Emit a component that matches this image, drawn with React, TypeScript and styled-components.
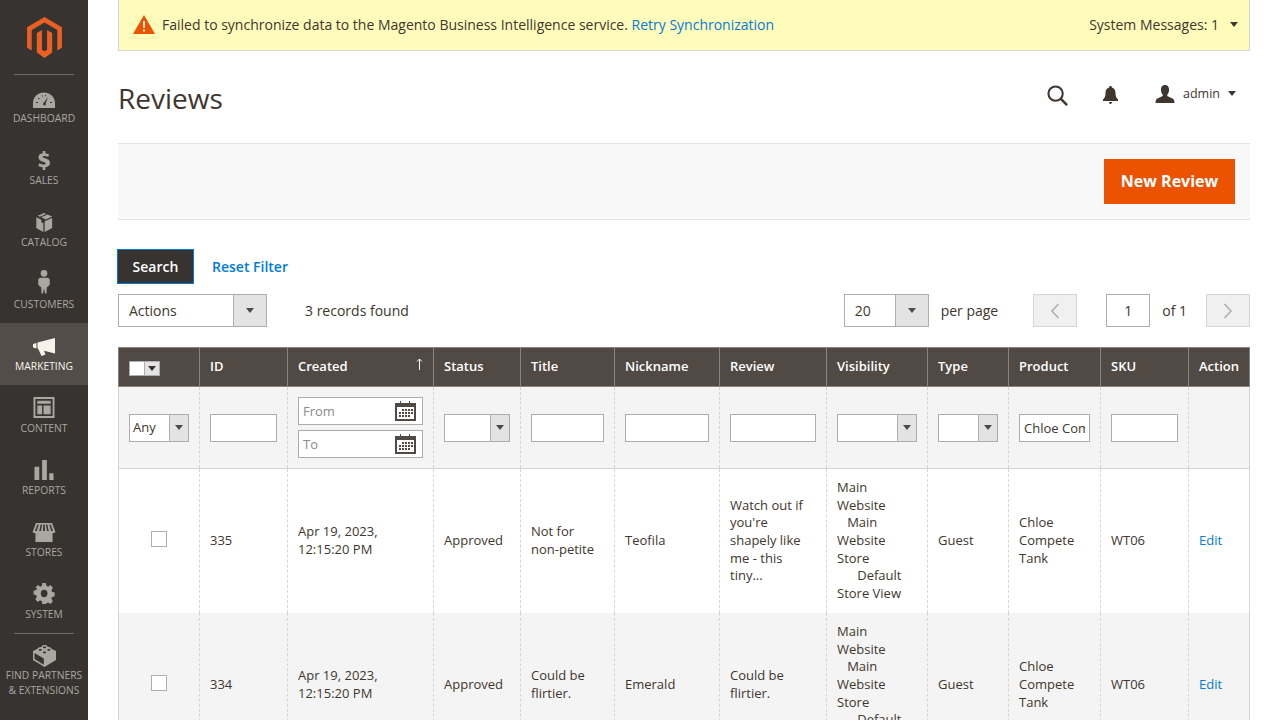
import React from "react";
import styled, { createGlobalStyle } from "styled-components";

const GlobalStyle = createGlobalStyle`
  html, body {
    margin: 0;
    height: 720px;
    overflow: hidden;
    background: #fff;
    font-family: "Open Sans", "Liberation Sans", sans-serif;
    color: #41362f;
  }
  * { box-sizing: border-box; }
`;

const Page = styled.div`
  display: flex;
  width: 1280px;
  height: 720px;
  overflow: hidden;
`;

const Sidebar = styled.nav`
  flex: 0 0 88px;
  height: 720px;
  background: #373330;
`;

const LogoBox = styled.div`
  height: 75px;
  margin: 0 14px;
  border-bottom: 1px solid #736d69;
  padding-top: 17px;
  padding-left: 13px;
  svg { display: block; }
`;

const MenuItem = styled.div<{ $active?: boolean }>`
  height: 62px;
  display: flex;
  flex-direction: column;
  align-items: center;
  justify-content: flex-end;
  padding-bottom: 12px;
  background: ${(p) => (p.$active ? "#524d49" : "transparent")};
  color: ${(p) => (p.$active ? "#f7f3eb" : "#aaa6a0")};
  font-size: 10.3px;
  line-height: 14px;
  text-align: center;
  white-space: nowrap;
  svg { display: block; margin-bottom: 3px; }
`;

const Divider = styled.div`
  height: 1px;
  margin: 0 14px;
  background: #736d69;
`;

const PartnersItem = styled(MenuItem)`
  height: 70px;
  padding-bottom: 0;
  justify-content: flex-start;
  padding-top: 11px;
  line-height: 15px;
  svg { margin-bottom: 1px; }
`;

const Main = styled.main`
  flex: 1;
  min-width: 0;
  padding: 0 30px;
`;

const Notice = styled.div`
  height: 51px;
  background: #fffbbb;
  border: 1px solid #d6d6d6;
  border-top: 0;
  display: flex;
  align-items: center;
  justify-content: space-between;
  padding: 0 11px 2px 14px;
  font-size: 14px;
  color: #41362f;
`;

const NoticeText = styled.div`
  display: flex;
  align-items: center;
  gap: 7px;
`;

const Link = styled.a`
  color: #007bdb;
`;

const Messages = styled.div`
  display: flex;
  align-items: center;
  gap: 11px;
`;

const Caret = styled.span<{ $color?: string }>`
  display: inline-block;
  width: 0;
  height: 0;
  border-left: 4px solid transparent;
  border-right: 4px solid transparent;
  border-top: 5px solid ${(p) => p.$color || "#41362f"};
`;

const PageHead = styled.header`
  height: 92px;
  display: flex;
  align-items: center;
  justify-content: space-between;
`;

const Title = styled.h1`
  margin: 1px 0 0;
  font-size: 28px;
  font-weight: 400;
  line-height: 36px;
  color: #41362f;
`;

const HeadActions = styled.div`
  display: flex;
  align-items: center;
  padding-right: 14px;
  margin-bottom: 4px;
  font-size: 12.5px;
  svg { display: block; }
`;

const Bell = styled.span`
  margin-left: 35px;
`;

const User = styled.div`
  display: flex;
  align-items: center;
  margin-left: 37px;
  margin-bottom: 3px;
  gap: 8px;
`;

const ActionsBar = styled.div`
  height: 77px;
  background: #f8f8f8;
  border-top: 1px solid #e3e3e3;
  border-bottom: 1px solid #e3e3e3;
  display: flex;
  align-items: center;
  justify-content: flex-end;
  padding-right: 15px;
`;

const PrimaryButton = styled.button`
  width: 131px;
  height: 45px;
  padding: 0 0 2px;
  border: 1px solid #eb5202;
  background: #eb5202;
  color: #fff;
  font: 700 16px "Open Sans", sans-serif;
`;

const FilterActions = styled.div`
  display: flex;
  align-items: center;
  gap: 18px;
  margin: 29px 0 0 -1px;
`;

const SearchButton = styled.button`
  width: 77px;
  height: 35px;
  border: 1px solid #007bdb;
  background: #373330;
  color: #fff;
  font: 600 14px "Open Sans", sans-serif;
`;

const BoldLink = styled(Link)`
  font-size: 14px;
  font-weight: 600;
`;

const GridControls = styled.div`
  display: flex;
  align-items: center;
  height: 33px;
  margin-top: 10px;
  font-size: 14px;
`;

const Select = styled.div<{ $width: number; $height?: number; $arrow?: number }>`
  flex: none;
  display: inline-grid;
  grid-template-columns: 1fr ${(p) => p.$arrow ?? 33}px;
  vertical-align: middle;
  width: ${(p) => p.$width}px;
  height: ${(p) => p.$height ?? 33}px;
  border: 1px solid #adadad;
  background: #fff;
  color: #41362f;
`;

const SelectValue = styled.span<{ $left?: number; $size?: number }>`
  display: flex;
  align-items: center;
  padding-left: ${(p) => p.$left ?? 10}px;
  font-size: ${(p) => p.$size ?? 14}px;
  overflow: hidden;
`;

const SelectArrow = styled.span`
  display: flex;
  align-items: center;
  justify-content: center;
  background: #e3e3e3;
  border-left: 1px solid #adadad;
`;

const Records = styled.span`
  margin-left: 38px;
  color: #41362f;
`;

const Spacer = styled.div`
  flex: 1;
`;

const PerPage = styled.span`
  margin: 0 35px 0 12px;
`;

const PagerButton = styled.span`
  flex: none;
  width: 44px;
  height: 33px;
  display: flex;
  align-items: center;
  justify-content: center;
  background: #f0f0f0;
  border: 1px solid #d6d6d6;
`;

const PageInput = styled.span`
  flex: none;
  width: 44px;
  height: 33px;
  margin-left: 29px;
  border: 1px solid #adadad;
  display: flex;
  align-items: center;
  justify-content: center;
`;

const OfPages = styled.span`
  margin: 0 19px 0 12px;
`;

const Grid = styled.table`
  width: 1131px;
  margin-top: 20px;
  border-collapse: collapse;
  table-layout: fixed;
  font-size: 13px;
  line-height: 17.68px;
  color: #41362f;
  td:first-child { border-left: 1px solid #d6d6d6; }
  td:last-child { border-right: 1px solid #d6d6d6; }
`;

const HeadCell = styled.th`
  position: relative;
  height: 39px;
  padding: 0 10px;
  background: #514943;
  border: 1px solid #8a837f;
  color: #fff;
  font-size: 13px;
  font-weight: 600;
  text-align: left;
  white-space: nowrap;
`;

const SortMark = styled.svg`
  position: absolute;
  top: 10px;
  right: 10px;
  display: block;
`;

const MassSelect = styled.span`
  display: inline-flex;
  vertical-align: middle;
  margin-top: 1px;
  width: 31px;
  height: 15px;
  background: #fff;
  border: 1px solid #adadad;
`;

const MassCheck = styled.span`
  flex: 1;
  background: #fff;
`;

const MassArrow = styled.span`
  flex: 0 0 15px;
  display: flex;
  align-items: center;
  justify-content: center;
  background: #e3e3e3;
  border-left: 1px solid #adadad;
`;

const FilterCell = styled.td`
  height: 82px;
  padding: 0 10px;
  background: #f4f4f4;
  border-left: 1px dashed #d6d6d6;
  border-right: 1px dashed #d6d6d6;
  border-bottom: 1px solid #d6d6d6;
  vertical-align: middle;
`;

const FilterInput = styled.input`
  display: block;
  width: 100%;
  height: 28px;
  padding: 0 4px;
  border: 1px solid #adadad;
  border-radius: 0;
  outline: 0;
  background: #fff;
  font: 13px "Open Sans", sans-serif;
  color: #41362f;
  &::placeholder { color: #8a8a8a; opacity: 1; }
`;

const DateStack = styled.div`
  display: flex;
  flex-direction: column;
  gap: 5px;
`;

const DateField = styled.div`
  position: relative;
  svg { position: absolute; top: 3px; right: 7px; display: block; }
`;

const Row = styled.tr<{ $striped?: boolean }>`
  background: ${(p) => (p.$striped ? "#f4f4f4" : "#fff")};
`;

const Cell = styled.td`
  padding: 10px;
  border-left: 1px dashed #d6d6d6;
  border-right: 1px dashed #d6d6d6;
  vertical-align: middle;
`;

const Checkbox = styled.span`
  display: block;
  width: 16px;
  height: 16px;
  margin: 0 auto 4px;
  background: #fff;
  border: 1px solid #adadad;
`;

function ArrowDown() {
  return <Caret $color="#514943" />;
}

function CalendarIcon() {
  return (
    <svg width="21" height="21" viewBox="0 0 21 21">
      <path fill="#514943" d="M0 3h5V1h1v2h8V1h1v2h6v18H0z" />
      <rect x="2" y="7" width="17" height="12" fill="#fff" />
      <path
        fill="#514943"
        d="M7 9h2v2H7zM10 9h2v2h-2zM13 9h2v2h-2zM16 9h2v2h-2zM4 12h2v2H4zM7 12h2v2H7zM10 12h2v2h-2zM13 12h2v2h-2zM16 12h2v2h-2zM4 15h2v2H4zM7 15h2v2H7zM10 15h2v2h-2zM13 15h2v2h-2z"
      />
    </svg>
  );
}

const sideIcon = "currentColor";

const menu: { label: string; icon: React.ReactNode; active?: boolean }[] = [
  {
    label: "DASHBOARD",
    icon: (
      <svg width="22" height="16" viewBox="0 0 22 16">
        <path
          fill={sideIcon}
          fillRule="evenodd"
          d="M0 16V11C0 5 5 .5 11 .5S22 5 22 11v5zM11.500 13.500c1.200-.2 1.700-1.300 1.200-2.200L15 4.800l-4 5.800c-1.200.5-1.300 2.900.5 2.900zM3 11h2v-1H3zM17 11h2v-1h-2zM5 6.500l1 1 .7-.7-1-1zM8.500 3.500l.6 1.300.8-.3-.6-1.300zM12 3h1v1.300h-1z"
        />
      </svg>
    ),
  },
  {
    label: "SALES",
    icon: (
      <svg width="12" height="19" viewBox="0 0 14 22">
        <path
          fill={sideIcon}
          d="M5.500 0h3v2.600c1.800.2 3.300.7 4.500 1.400l-1.100 3c-1.500-.9-3-1.300-4.500-1.300-1.300 0-1.900.4-1.900 1 0 .7.800 1 2.800 1.700C11.700 9.300 14 10.500 14 13.800c0 2.600-1.800 4.500-5.500 5V22h-3v-3.100c-2-.2-3.900-.8-5.100-1.700l1.200-3c1.500 1 3.300 1.600 5 1.600 1.500 0 2.300-.5 2.300-1.300 0-.8-.8-1.200-2.900-1.900C3 11.500.6 10.400.6 7.200c0-2.400 1.700-4.200 4.900-4.600z"
        />
      </svg>
    ),
  },
  {
    label: "CATALOG",
    icon: (
      <svg width="18" height="19" viewBox="0 0 19 21">
        <path
          fill={sideIcon}
          d="M9.500 0l2.400 1-6.800 3.200L2.500 3.100zM13.300 1.600L18.500 4l-6.900 3.200L6.500 4.800zM1 4.800l5.500 2.700v2.800l2.300 1V21L1 16.500zM18.500 5.400v11.100L10.200 21V9z"
        />
      </svg>
    ),
  },
  {
    label: "CUSTOMERS",
    icon: (
      <svg width="12" height="24" viewBox="0 0 12 25">
        <path
          fill={sideIcon}
          d="M6 0a3.500 3.500 0 1 1 0 7 3.500 3.500 0 0 1 0-7zM2.500 8h7C11 8 12 9 12 10.500V15l-1.500 2L9 18l-.5 7-1.500-.7L6 19l-1 5.300-1.500.7L3 18l-1.500-1L0 15v-4.500C0 9 1 8 2.500 8z"
        />
      </svg>
    ),
  },
  {
    label: "MARKETING",
    active: true,
    icon: (
      <svg width="22" height="18" viewBox="0 0 22 18">
        <path
          fill={sideIcon}
          d="M22 0v15.500L11 12.800l1.500 3.700L8.500 18 5.500 11.500 4.500 10V4.500L22 0zM0 6l3.500-1v5.500L0 9.500z"
        />
      </svg>
    ),
  },
  {
    label: "CONTENT",
    icon: (
      <svg width="22" height="21" viewBox="0 0 22 22">
        <path
          fill={sideIcon}
          fillRule="evenodd"
          d="M0 0h22v22H0zM2 2v18h18V2zM4 4h14v3H4zM4 9h5v9H4zM10.500 9H18v9h-7.500z"
        />
      </svg>
    ),
  },
  {
    label: "REPORTS",
    icon: (
      <svg width="20" height="20" viewBox="0 0 20 21">
        <path fill={sideIcon} d="M0 7h5v14H0zM8 0h5v21H8zM15.500 14H20v7h-4.500z" />
      </svg>
    ),
  },
  {
    label: "STORES",
    icon: (
      <svg width="24" height="19" viewBox="0 0 24 20">
        <path
          fill={sideIcon}
          fillRule="evenodd"
          d="M3.500 0h17L24 9.500c-.5 1.200-2 1.500-3 .8V20H3V10.300c-1 .7-2.500.4-3-.8zM5 1.500L2.500 8.500h1.800L6.500 1.500zM8.500 1.500L7 8.500h1.800l1.200-7zM11.200 1.500l-.2 7h2l-.2-7zM14 1.500l1.200 7H17l-1.500-7zM17.500 1.500l2.200 7h1.800L19 1.500z"
        />
      </svg>
    ),
  },
  {
    label: "SYSTEM",
    icon: (
      <svg width="22" height="21" viewBox="0 0 22 22">
        <path
          fill={sideIcon}
          fillRule="evenodd"
          d="M9 0h4l.6 3 2 .8 2.600-1.700 2.800 2.800-1.700 2.600.8 2 2.900.5v4l-3 .6-.7 2 1.700 2.600-2.800 2.800-2.600-1.700-2 .8L13 22H9l-.6-3-2-.8-2.600 1.700L1 17.100l1.700-2.600-.8-2L-1 12V8l3-.6.800-2L1.100 4.900 3.900 2.100l2.600 1.700 2-.8zM11 7.200a3.800 3.800 0 1 0 0 7.600 3.800 3.800 0 0 0 0-7.600z"
          transform="translate(1 0) scale(.92 1)"
        />
      </svg>
    ),
  },
];

const rows = [
  {
    id: "335",
    title: "Not for non-petite",
    nickname: "Teofila",
    review: "Watch out if you're shapely like me - this tiny...",
  },
  {
    id: "334",
    title: "Could be flirtier.",
    nickname: "Emerald",
    review: "Could be flirtier.",
  },
];

const columns = [81, 88, 146, 87, 94, 105, 107, 101, 81, 92, 88, 61];

export default function App() {
  return (
    <Page>
      <GlobalStyle />
      <Sidebar>
        <LogoBox>
          <svg width="35" height="41" viewBox="0 0 34 40">
            <path
              fill="#eb5f22"
              d="M17 0l17 10v20l-4.500 2.600V12.600L17 5.300 4.500 12.600v20L0 30V10zM9.500 15.500L14.500 12.600v19.300L17 33.400l2.500-1.500V12.600l5 2.900v19.200L17 40l-7.500-5.300z"
            />
          </svg>
        </LogoBox>
        {menu.map((item) => (
          <MenuItem key={item.label} $active={item.active}>
            {item.icon}
            {item.label}
          </MenuItem>
        ))}
        <Divider />
        <PartnersItem>
          <svg width="23" height="22" viewBox="0 0 23 22">
            <path
              fill="currentColor"
              fillRule="evenodd"
              d="M11.500 0c1.500 0 2.600.6 2.800 1.300l.1.300 1.100.5c1.500 0 2.800.7 2.800 1.600l4.700 2.300v9L11.500 22 0 15V6l4.600-2.200c.1-.8 1.300-1.500 2.800-1.500l1.200-.6C8.800.7 10 0 11.500 0zM1.500 8v6.100l9.300 5.600v-6.200zM7.300 4c-1 0-1.600.4-1.600.9s.7.900 1.600.9 1.600-.4 1.600-.9-.7-.9-1.600-.9zM15.800 4c-1 0-1.600.4-1.600.9s.7.900 1.600.9 1.600-.4 1.600-.9-.7-.9-1.600-.9zM11.500 1.500c-1 0-1.600.4-1.600.9s.7.900 1.600.9 1.600-.4 1.600-.9-.7-.9-1.600-.9zM11.500 6.500c-1 0-1.600.4-1.600.9s.7.900 1.600.9 1.600-.4 1.600-.9-.7-.9-1.600-.9z"
            />
          </svg>
          FIND PARTNERS
          <br />& EXTENSIONS
        </PartnersItem>
      </Sidebar>
      <Main>
        <Notice>
          <NoticeText>
            <svg width="22" height="19" viewBox="0 0 22 19">
              <path fill="#eb5202" d="M11 0l11 19H0z" />
              <path fill="#fff" d="M10 6h2l-.3 7h-1.400zM10 14.500h2v2h-2z" />
            </svg>
            <span>
              Failed to synchronize data to the Magento Business Intelligence
              service. <Link>Retry Synchronization</Link>
            </span>
          </NoticeText>
          <Messages>
            System Messages: 1 <Caret />
          </Messages>
        </Notice>
        <PageHead>
          <Title>Reviews</Title>
          <HeadActions>
            <svg width="21" height="21" viewBox="0 0 22 22">
              <circle cx="9" cy="9" r="7.500" fill="none" stroke="#41362f" strokeWidth="2.200" />
              <path d="M14.500 14.500L21 21" stroke="#41362f" strokeWidth="2.600" />
            </svg>
            <Bell>
              <svg width="15" height="18" viewBox="0 0 15 18">
                <path
                  fill="#41362f"
                  d="M7.500 0c.9 0 1.300.6 1.400 1.400C11.300 2.200 12.500 4 12.500 7c0 3.500.8 5 2.500 6.500V15H0v-1.500C1.700 12 2.500 10.500 2.500 7c0-3 1.200-4.800 3.600-5.600C6.200.6 6.600 0 7.500 0zM6 16h3c0 1.200-.6 2-1.500 2S6 17.200 6 16z"
                />
              </svg>
            </Bell>
            <User>
              <svg width="20" height="18" viewBox="0 0 20 19">
                <path
                  fill="#41362f"
                  d="M10 0c2.800 0 4.300 2 4.300 5 0 2.300-.8 4-1.900 5.200v1.500l5 2.300c1.600.7 2.600 1.600 2.600 5H0c0-3.400 1-4.300 2.600-5l5-2.300v-1.500C6.500 9 5.700 7.300 5.700 5 5.700 2 7.200 0 10 0z"
                />
              </svg>
              admin
              <Caret />
            </User>
          </HeadActions>
        </PageHead>
        <ActionsBar>
          <PrimaryButton>New Review</PrimaryButton>
        </ActionsBar>
        <FilterActions>
          <SearchButton>Search</SearchButton>
          <BoldLink>Reset Filter</BoldLink>
        </FilterActions>
        <GridControls>
          <Select $width={149}>
            <SelectValue>Actions</SelectValue>
            <SelectArrow>
              <ArrowDown />
            </SelectArrow>
          </Select>
          <Records>3 records found</Records>
          <Spacer />
          <Select $width={85}>
            <SelectValue>20</SelectValue>
            <SelectArrow>
              <ArrowDown />
            </SelectArrow>
          </Select>
          <PerPage>per page</PerPage>
          <PagerButton>
            <svg width="10" height="16" viewBox="0 0 10 16">
              <path d="M8.500 1L2 8l6.500 7" fill="none" stroke="#adadad" strokeWidth="1.500" />
            </svg>
          </PagerButton>
          <PageInput>1</PageInput>
          <OfPages>of 1</OfPages>
          <PagerButton>
            <svg width="10" height="16" viewBox="0 0 10 16">
              <path d="M1.500 1L8 8l-6.500 7" fill="none" stroke="#adadad" strokeWidth="1.500" />
            </svg>
          </PagerButton>
        </GridControls>
        <Grid>
          <colgroup>
            {columns.map((w, i) => (
              <col key={i} width={w} />
            ))}
          </colgroup>
          <thead>
            <tr>
              <HeadCell>
                <MassSelect>
                  <MassCheck />
                  <MassArrow>
                    <Caret $color="#373330" />
                  </MassArrow>
                </MassSelect>
              </HeadCell>
              <HeadCell>ID</HeadCell>
              <HeadCell>
                Created
                <SortMark width="7" height="12" viewBox="0 0 7 12">
                  <path d="M3.500 12V1M1 3.500L3.500 1 6 3.500" fill="none" stroke="#fff" />
                </SortMark>
              </HeadCell>
              <HeadCell>Status</HeadCell>
              <HeadCell>Title</HeadCell>
              <HeadCell>Nickname</HeadCell>
              <HeadCell>Review</HeadCell>
              <HeadCell>Visibility</HeadCell>
              <HeadCell>Type</HeadCell>
              <HeadCell>Product</HeadCell>
              <HeadCell>SKU</HeadCell>
              <HeadCell>Action</HeadCell>
            </tr>
            <tr>
              <FilterCell>
                <Select $width={60} $height={28} $arrow={19}>
                  <SelectValue $left={3} $size={13}>Any</SelectValue>
                  <SelectArrow>
                    <ArrowDown />
                  </SelectArrow>
                </Select>
              </FilterCell>
              <FilterCell>
                <FilterInput readOnly />
              </FilterCell>
              <FilterCell>
                <DateStack>
                  <DateField>
                    <FilterInput readOnly placeholder="From" />
                    <CalendarIcon />
                  </DateField>
                  <DateField>
                    <FilterInput readOnly placeholder="To" />
                    <CalendarIcon />
                  </DateField>
                </DateStack>
              </FilterCell>
              <FilterCell>
                <Select $width={66} $height={28} $arrow={19}>
                  <SelectValue />
                  <SelectArrow>
                    <ArrowDown />
                  </SelectArrow>
                </Select>
              </FilterCell>
              <FilterCell>
                <FilterInput readOnly />
              </FilterCell>
              <FilterCell>
                <FilterInput readOnly />
              </FilterCell>
              <FilterCell>
                <FilterInput readOnly />
              </FilterCell>
              <FilterCell>
                <Select $width={80} $height={28} $arrow={19}>
                  <SelectValue />
                  <SelectArrow>
                    <ArrowDown />
                  </SelectArrow>
                </Select>
              </FilterCell>
              <FilterCell>
                <Select $width={60} $height={28} $arrow={19}>
                  <SelectValue />
                  <SelectArrow>
                    <ArrowDown />
                  </SelectArrow>
                </Select>
              </FilterCell>
              <FilterCell>
                <FilterInput readOnly value="Chloe Compete Tank" />
              </FilterCell>
              <FilterCell>
                <FilterInput readOnly />
              </FilterCell>
              <FilterCell />
            </tr>
          </thead>
          <tbody>
            {rows.map((row, i) => (
              <Row key={row.id} $striped={i % 2 === 1}>
                <Cell>
                  <Checkbox />
                </Cell>
                <Cell>{row.id}</Cell>
                <Cell>
                  Apr 19, 2023,
                  <br />
                  12:15:20 PM
                </Cell>
                <Cell>Approved</Cell>
                <Cell>{row.title}</Cell>
                <Cell>{row.nickname}</Cell>
                <Cell>{row.review}</Cell>
                <Cell>
                  Main Website
                  <br />
                  {"\u00a0\u00a0\u00a0"}Main Website Store
                  <br />
                  {"\u00a0\u00a0\u00a0\u00a0\u00a0\u00a0"}Default Store View
                </Cell>
                <Cell>Guest</Cell>
                <Cell>Chloe Compete Tank</Cell>
                <Cell>WT06</Cell>
                <Cell>
                  <Link>Edit</Link>
                </Cell>
              </Row>
            ))}
          </tbody>
        </Grid>
      </Main>
    </Page>
  );
}
